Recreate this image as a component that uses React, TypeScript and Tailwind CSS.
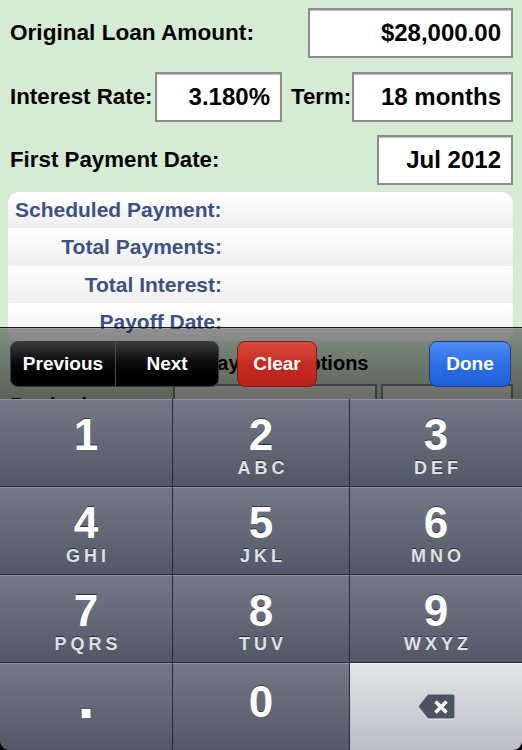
import React from 'react'

const font = { fontFamily: '"Liberation Sans", Arial, Helvetica, sans-serif' }

function Field({ value, className }: { value: string; className: string }) {
  return (
    <div
      className={`h-[50px] flex items-center justify-end pr-[10px] bg-white border-2 border-[#8c8c8c] shadow-[inset_0_1px_1px_rgba(0,0,0,0.25)] text-[24px] font-bold text-black ${className}`}
    >
      {value}
    </div>
  )
}

function ResultRow({ label }: { label: string }) {
  return (
    <div className="h-[37.5px] flex items-center bg-gradient-to-b from-white to-[#eeeeee]">
      <div className="w-[214px] text-right text-[21px] font-bold text-[#3b5283] whitespace-nowrap">{label}</div>
    </div>
  )
}

const keys = [
  { d: '1', l: '' },
  { d: '2', l: 'ABC' },
  { d: '3', l: 'DEF' },
  { d: '4', l: 'GHI' },
  { d: '5', l: 'JKL' },
  { d: '6', l: 'MNO' },
  { d: '7', l: 'PQRS' },
  { d: '8', l: 'TUV' },
  { d: '9', l: 'WXYZ' },
]

const darkKey =
  'flex flex-col items-center bg-gradient-to-b from-[#737987] to-[#525866] border-t border-[#8e94a0]'

function DigitKey({ d, l }: { d: string; l: string }) {
  return (
    <div className={`${darkKey} pt-[13px]`}>
      <div className="text-[44px] leading-none font-bold text-white [text-shadow:0_-1px_0_rgba(0,0,0,0.55)]">{d}</div>
      {l && (
        <div className="mt-[2px] pl-[4px] text-[18px] leading-none font-bold tracking-[4px] text-[#dfe1e6] [text-shadow:0_-1px_0_rgba(0,0,0,0.55)]">
          {l}
        </div>
      )}
    </div>
  )
}

function Backspace() {
  return (
    <svg width="37" height="26" viewBox="0 0 37 26" className="drop-shadow-[0_1px_0_rgba(255,255,255,0.8)]">
      <path d="M10 0.5 H34.5 a2 2 0 0 1 2 2 V22.5 a2 2 0 0 1 -2 2 H10 L0.5 12.5 Z" fill="#4c5261" />
      <path d="M17.5 7.5 L28.5 18.5 M28.5 7.5 L17.5 18.5" stroke="#ffffff" strokeWidth="3.6" />
    </svg>
  )
}

export default function App() {
  return (
    <div className="relative w-[522px] h-[750px] overflow-hidden bg-[#d5ebd3]" style={font}>
      {/* form */}
      <div className="pt-[8px]">
        <div className="flex items-center h-[50px]">
          <div className="pl-[10px] text-[22.6px] font-bold text-black">Original Loan Amount:</div>
          <Field value="$28,000.00" className="ml-auto mr-[9px] w-[205px]" />
        </div>

        <div className="flex items-center h-[50px] mt-[14px]">
          <div className="pl-[10px] w-[155px] text-[22.3px] font-bold text-black whitespace-nowrap">Interest Rate:</div>
          <Field value="3.180%" className="w-[127px]" />
          <div className="ml-[9px] text-[22.3px] font-bold text-black">Term:</div>
          <Field value="18 months" className="ml-auto mr-[9px] w-[161px]" />
        </div>

        <div className="flex items-center h-[50px] mt-[13px]">
          <div className="pl-[10px] text-[22.3px] font-bold text-black">First Payment Date:</div>
          <Field value="Jul 2012" className="ml-auto mr-[9px] w-[136px]" />
        </div>

        <div className="mt-[7px] ml-[8px] mr-[9px] rounded-[12px] overflow-hidden bg-white">
          <div className="h-[36px] flex items-center bg-gradient-to-b from-white to-[#eeeeee] pl-[7px] text-[21px] font-bold text-[#3b5283]">
            Scheduled Payment:
          </div>
          <ResultRow label="Total Payments:" />
          <ResultRow label="Total Interest:" />
          <ResultRow label="Payoff Date:" />
        </div>

        <div className="mt-[8px] h-[28px] leading-[28px] pl-[204px] text-[20px] font-bold text-black">Payment Options</div>

        <div className="mt-[7px] flex h-[50px]">
          <div className="pl-[10px] w-[173px] pt-[5px] text-[21px] font-bold text-black">Beginning</div>
          <div className="w-[204px] bg-white border-2 border-[#8c8c8c]" />
          <div className="ml-[4px] w-[132px] bg-white border-2 border-[#8c8c8c]" />
        </div>
      </div>

      {/* input accessory toolbar */}
      <div className="absolute left-0 right-0 top-[327px] h-[72px] border-t border-black/70 bg-gradient-to-b from-black/40 to-black/58 shadow-[inset_0_1px_0_rgba(255,255,255,0.15)]">
        <div className="absolute left-[10px] top-[13px] w-[209px] h-[46px] flex rounded-[8px] border border-[#3a3a3a] bg-gradient-to-b from-[#3c3c3c] via-[#080808] via-50% to-black overflow-hidden">
          <div className="w-[105px] flex items-center justify-center text-[19px] font-bold text-white border-r border-[#4a4a4a]">
            Previous
          </div>
          <div className="flex-1 flex items-center justify-center text-[19px] font-bold text-white">Next</div>
        </div>
        <div className="absolute left-[237px] top-[13px] w-[80px] h-[46px] flex items-center justify-center rounded-[8px] border border-[#7d1a14] bg-gradient-to-b from-[#dc4b42] via-[#c42a22] via-50% to-[#b8231c] text-[19px] font-bold text-white">
          Clear
        </div>
        <div className="absolute left-[429px] top-[13px] w-[82px] h-[46px] flex items-center justify-center rounded-[8px] border border-[#1c3f8c] bg-gradient-to-b from-[#4e8ef2] via-[#2d6ee6] via-50% to-[#1f5fd9] text-[19px] font-bold text-white">
          Done
        </div>
      </div>

      {/* number pad */}
      <div className="absolute left-0 right-0 top-[399px] h-[351px] bg-black">
        <div className="h-full grid grid-cols-[172px_176px_172px] grid-rows-4 gap-px bg-[#282c34] rounded-b-[9px] overflow-hidden">
          {keys.map((k) => (
            <DigitKey key={k.d} d={k.d} l={k.l} />
          ))}
          <div className={`${darkKey} pt-[2px]`}>
            <div className="text-[62px] leading-none font-bold text-white [text-shadow:0_-1px_0_rgba(0,0,0,0.55)]">.</div>
          </div>
          <div className={`${darkKey} pt-[16px]`}>
            <div className="text-[44px] leading-none font-bold text-white [text-shadow:0_-1px_0_rgba(0,0,0,0.55)]">0</div>
          </div>
          <div className="flex items-center justify-center bg-gradient-to-b from-[#e4e5e8] to-[#babdc4] border-t border-[#f2f3f5]">
            <Backspace />
          </div>
        </div>
      </div>
    </div>
  )
}
